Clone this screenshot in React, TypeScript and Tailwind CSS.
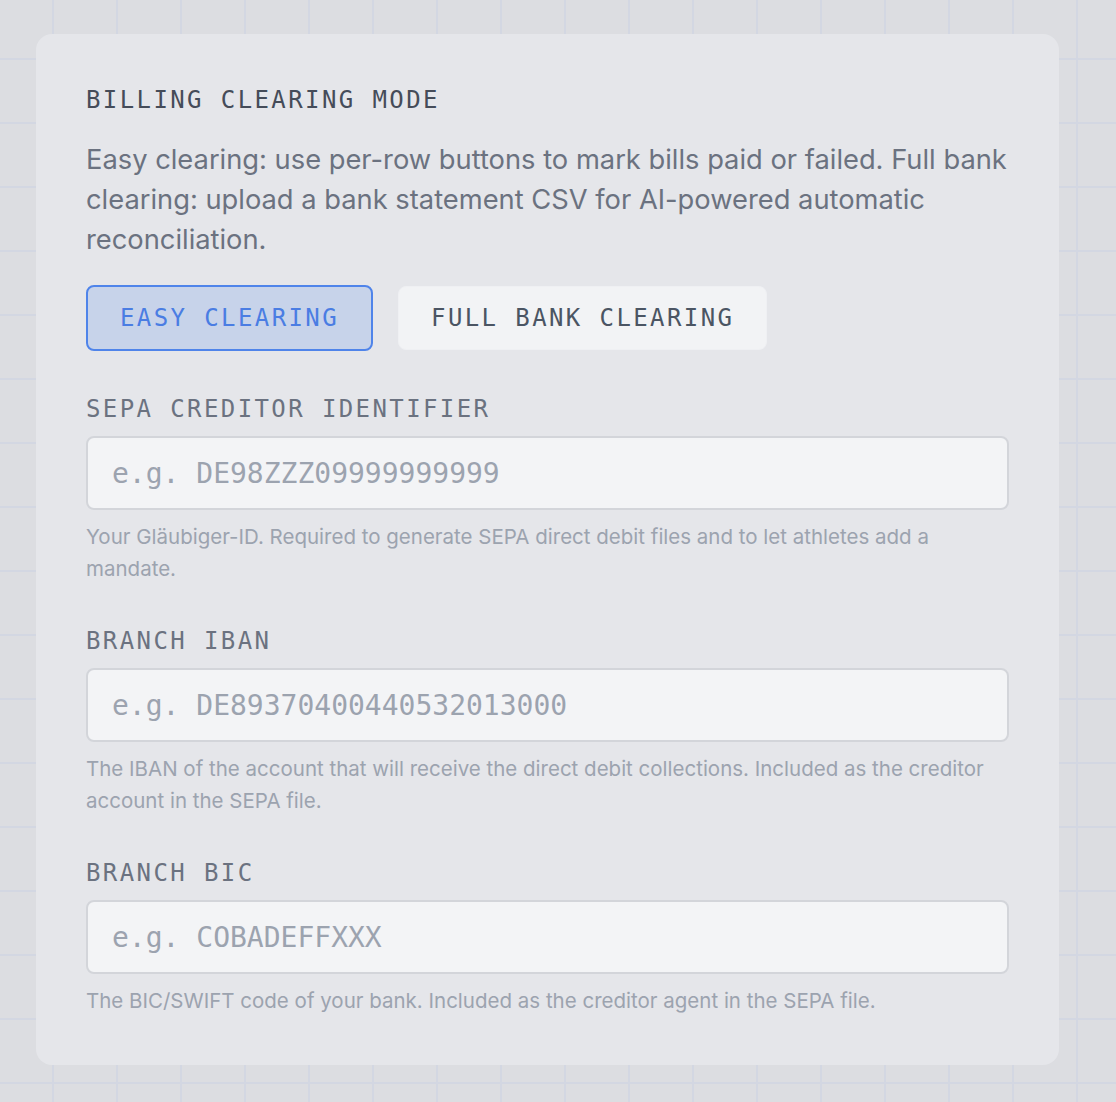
import React from "react";

const mono = "font-['DejaVu_Sans_Mono','Liberation_Mono',monospace]";
const sans = "font-['Inter','Noto_Sans',sans-serif]";

function Field({
  label,
  placeholder,
  help,
  first = false,
}: {
  label: string;
  placeholder: string;
  help: string;
  first?: boolean;
}) {
  return (
    <div className={`${first ? "mt-[42px]" : "mt-[40px]"} flex flex-col`}>
      <label className={`${mono} text-[24px] leading-[32px] tracking-[0.1em] text-[#6b7280]`}>
        {label}
      </label>
      <input
        className={`${mono} mt-[11px] h-[74px] w-full rounded-[8px] border-2 border-[#d3d5da] bg-[#f3f4f6] px-[24px] text-[28px] text-[#374151] outline-none placeholder:text-[#9ca3af]`}
        placeholder={placeholder}
      />
      <p className={`${sans} mt-[11px] text-[20.5px] leading-[32px] text-[#9ca3af]`}>{help}</p>
    </div>
  );
}

export default function App() {
  const [mode, setMode] = React.useState<"easy" | "full">("easy");

  return (
    <div className="min-h-[1102px] w-full bg-[#dcdde1] bg-[linear-gradient(to_right,#d3d7e2_2px,transparent_2px),linear-gradient(to_bottom,#d3d7e2_2px,transparent_2px)] bg-[size:64px_64px] bg-[position:-12px_-6px] pl-[36px] pt-[34px]">
      <div className="flex w-[1023px] flex-col rounded-[16px] bg-[#e5e6ea] px-[50px] pb-[48px] pt-[50px]">
        <h2 className={`${mono} text-[24px] leading-[32px] tracking-[0.1em] text-[#454c59]`}>
          BILLING CLEARING MODE
        </h2>
        <p className={`${sans} mt-6 text-[27.3px] leading-[40px] text-[#6b7280]`}>
          Easy clearing: use per-row buttons to mark bills paid or failed. Full bank clearing:
          upload a bank statement CSV for AI-powered automatic reconciliation.
        </p>

        <div className="mt-[25px] flex items-center gap-[25px]">
          <button
            onClick={() => setMode("easy")}
            className={`${mono} h-[66px] rounded-[8px] border-2 px-[32px] text-[24px] tracking-[0.1em] ${
              mode === "easy"
                ? "border-[#4f84ea] bg-[#c7d3ea] text-[#4a7de3]"
                : "border-[#eef0f3] bg-[#f3f4f6] text-[#4b5563]"
            }`}
          >
            EASY CLEARING
          </button>
          <button
            onClick={() => setMode("full")}
            className={`${mono} h-[64px] rounded-[8px] border px-[32px] text-[24px] tracking-[0.1em] ${
              mode === "full"
                ? "border-2 border-[#4f84ea] bg-[#c7d3ea] text-[#4a7de3]"
                : "border-[#eff0f3] bg-[#f2f3f5] text-[#4b5563]"
            }`}
          >
            FULL BANK CLEARING
          </button>
        </div>

        <Field
          first
          label="SEPA CREDITOR IDENTIFIER"
          placeholder="e.g. DE98ZZZ09999999999"
          help="Your Gläubiger-ID. Required to generate SEPA direct debit files and to let athletes add a mandate."
        />
        <Field
          label="BRANCH IBAN"
          placeholder="e.g. DE89370400440532013000"
          help="The IBAN of the account that will receive the direct debit collections. Included as the creditor account in the SEPA file."
        />
        <Field
          label="BRANCH BIC"
          placeholder="e.g. COBADEFFXXX"
          help="The BIC/SWIFT code of your bank. Included as the creditor agent in the SEPA file."
        />
      </div>
    </div>
  );
}
